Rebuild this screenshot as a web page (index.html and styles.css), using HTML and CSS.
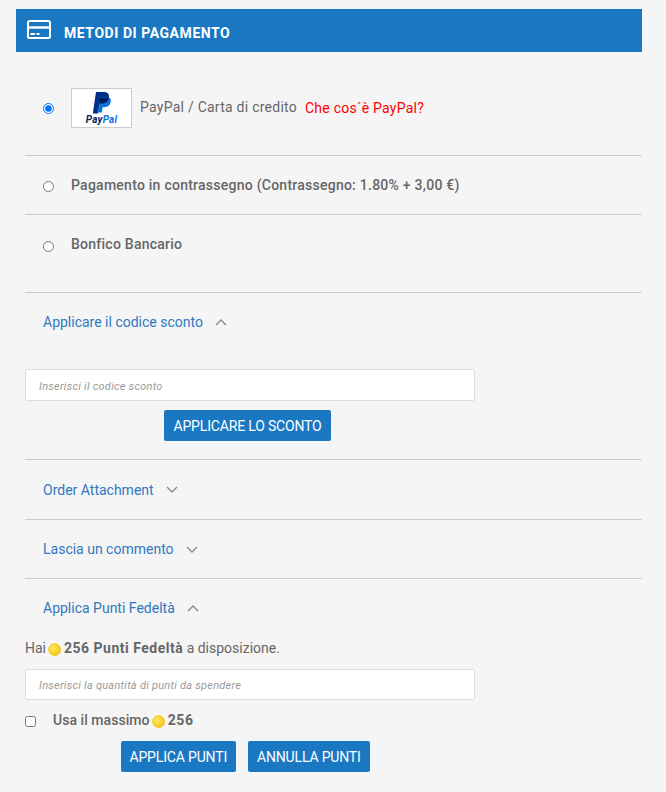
FILE: index.html
```html
<!doctype html>
<html lang="it">
<head>
  <meta charset="UTF-8">
  <title>Metodi di pagamento</title>
  <link rel="stylesheet" href="styles.css">
</head>
<body>
  <div class="head">
    <svg class="card-ico" width="24" height="19" viewBox="0 0 24 19" fill="none" stroke="#fff" stroke-width="2">
      <rect x="1" y="1" width="22" height="17" rx="1.500"/>
      <path d="M1 7.500h22" stroke-width="2.400"/>
      <path d="M3.500 14h4.500M9.500 14h3" stroke-width="1.800"/>
    </svg>
    <span>METODI DI PAGAMENTO</span>
  </div>

  <div class="pay pay-first">
    <input type="radio" name="pay" checked>
    <div class="pp-logo">
      <svg width="19" height="22" viewBox="0 0 19 22">
        <path fill="#002f86" d="M4 0h7.500c3.700 0 6 1.800 5.500 5.200-.6 4-3.300 6.300-7 6.300H7.300L6 21.500H.8z"/>
        <path fill="#0f70d8" d="M7 5h7.500c3 0 4.800 1.600 4.300 4.600-.6 3.700-3 5.700-6.300 5.700h-1.800l-.9 5.200H5.300z"/>
        <path fill="#001c64" d="M6.900 5.500h10.100c-.6 3.700-3.300 6-7 6H7.300L6 19z"/>
      </svg>
      <b class="pp-txt"><i class="pp-dark">Pay</i><i class="pp-light">Pal</i></b>
    </div>
    <span class="pp-name">PayPal / Carta di credito</span>
    <a class="what">Che cos´è PayPal?</a>
  </div>
  <div class="pay pay-cod">
    <input type="radio" name="pay">
    <b>Pagamento in contrassegno (Contrassegno: 1.80% + 3,00 €)</b>
  </div>
  <div class="pay pay-bank">
    <input type="radio" name="pay">
    <b>Bonfico Bancario</b>
  </div>

  <div class="fold fold-open">
    <a>Applicare il codice sconto</a>
    <svg class="chev" width="12" height="7" viewBox="0 0 12 7"><path d="M1 6l5-5 5 5"/></svg>
  </div>
  <div class="coupon">
    <input class="txt" type="text" placeholder="Inserisci il codice sconto">
    <div class="btns btns-coupon"><button>APPLICARE LO SCONTO</button></div>
  </div>

  <div class="fold fold-order">
    <a>Order Attachment</a>
    <svg class="chev" width="12" height="7" viewBox="0 0 12 7"><path d="M1 1l5 5 5-5"/></svg>
  </div>
  <div class="fold">
    <a>Lascia un commento</a>
    <svg class="chev" width="12" height="7" viewBox="0 0 12 7"><path d="M1 1l5 5 5-5"/></svg>
  </div>
  <div class="fold fold-last">
    <a>Applica Punti Fedeltà</a>
    <svg class="chev" width="12" height="7" viewBox="0 0 12 7"><path d="M1 6l5-5 5 5"/></svg>
  </div>

  <div class="points">
    <p class="have">Hai <i class="coin"></i> <b>256 Punti Fedeltà</b> a disposizione.</p>
    <input class="txt txt-points" type="text" placeholder="Inserisci la quantità di punti da spendere">
    <label class="max">
      <input type="checkbox">
      <span class="max-txt">Usa il massimo <i class="coin"></i> <b>256</b></span>
    </label>
    <div class="btns btns-points">
      <button>APPLICA PUNTI</button>
      <button>ANNULLA PUNTI</button>
    </div>
  </div>
</body>
</html>
```

FILE: styles.css
```css
*{box-sizing:border-box;}
body{margin:0;
     padding:9px 24px 0 16px;
     background:#f5f5f5;
     color:#666;
     font-family:"Roboto","Liberation Sans",sans-serif;
     font-size:14px;}
a{color:#2f78c0;}
b{font-weight:500;letter-spacing:.25px;}

.head{height:43px;
      background:#1a78c2;
      color:#fff;
      font-weight:700;
      display:flex;
      align-items:center;
      padding:4px 0 0 11px;}
.head span{margin-left:13px;font-size:14px;letter-spacing:.55px;}
.card-ico{margin-top:-6px;}

.pay{margin-left:9px;
     padding-left:18px;
     display:flex;
     align-items:center;
     border-bottom:1px solid #ccc;}
.pay input{margin:0 17px 0 0;width:11px;height:11px;flex:none;}
.pay-first{height:104px;padding-top:9px;}
.pay-cod{height:59px;}
.pay-cod input{margin-top:2px;}
.pay-bank{height:78px;padding-bottom:20px;}
.pay-bank input{margin-top:6px;}

.pp-logo{width:61px;
         height:40px;
         background:#fff;
         border:1px solid #ccc;
         display:flex;
         flex-direction:column;
         align-items:center;
         padding-top:3px;
         margin-right:8px;}
.pp-txt{font-size:10px;font-weight:700;line-height:11px;letter-spacing:.2px;}
.pp-dark{color:#001c64;}
.pp-light{color:#0f70d8;}
.pp-name{margin-top:-3px;letter-spacing:.25px;}
.what{color:#f00;margin:-1px 0 0 8px;letter-spacing:.25px;}

.fold{margin-left:9px;
      padding-left:18px;
      height:59px;
      display:flex;
      align-items:center;
      border-bottom:1px solid #ccc;}
.chev{margin-left:12px;fill:none;stroke:#888;stroke-width:1.3;}
.fold-open,.fold-last{border-bottom:0;}
.fold-open{height:58px;}
.fold-order{height:60px;}
.fold-last{height:58px;}

.coupon{margin-left:9px;
        padding-top:18px;
        height:109px;
        border-bottom:1px solid #ccc;}
.txt{display:block;
     width:450px;
     height:32px;
     padding:2px 13px 0;
     border:1px solid #ddd;
     border-radius:2px;
     background:#fff;
     font-family:inherit;
     font-size:11px;
     font-style:italic;
     letter-spacing:.25px;}
.txt::placeholder{color:#999;}
.txt-points{height:31px;}

.btns{display:flex;gap:12px;}
.btns-coupon{padding:9px 0 0 139px;}
.btns-points{padding:11px 0 0 96px;}
button{height:31px;
       padding:0 9.5px;
       border:0;
       border-radius:2px;
       background:#1a78c2;
       color:#fff;
       font-family:inherit;
       font-size:14px;
       letter-spacing:-.17px;}
.btns-points button{padding:0 8.5px;}
.btns-points button:last-child{padding:0 9.5px;}

.points{margin-left:9px;}
.have{margin:1px 0 11px;line-height:20px;}
.have b{font-weight:700;letter-spacing:.5px;}
.coin{display:inline-block;
      width:13px;
      height:13px;
      margin:0 -1px;
      border-radius:50%;
      background:radial-gradient(circle at 40% 40%,#ffe766,#f2c618 70%,#dba90c);
      vertical-align:-3px;}
.max{display:flex;align-items:center;height:20px;margin-top:10px;}
.max input{margin:2px 17px 0 0;width:11px;height:11px;}
.max-txt{font-weight:500;letter-spacing:.05px;}
.max-txt b{font-weight:700;letter-spacing:.6px;}
```
